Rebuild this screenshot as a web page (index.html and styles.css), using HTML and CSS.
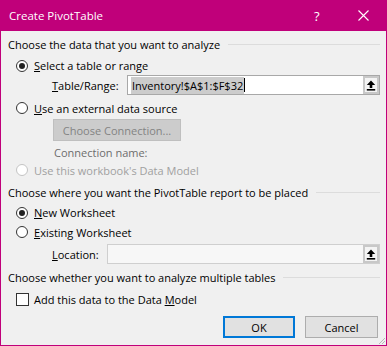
FILE: index.html
```html
<!DOCTYPE html>
<html lang="en">
<head>
    <meta charset="UTF-8">
    <title>Create PivotTable</title>
    <link rel="stylesheet" href="styles.css">
</head>
<body>
    <div class="dialog">
        <div class="titlebar">
            <span class="title">Create PivotTable</span>
            <span class="help">?</span>
            <span class="close">
                <svg width="11" height="11" viewBox="0 0 11 11"><path d="M0.5 0.5 L10.5 10.5 M10.5 0.5 L0.5 10.5" stroke="#fff" stroke-width="1.1"/></svg>
            </span>
        </div>
        <div class="content">
            <div class="group-head g-data"><span>Choose the data that you want to analyze</span><span class="rule"></span></div>
            <div class="option r-select"><span class="radio checked"></span><span><u>S</u>elect a table or range</span></div>
            <div class="field f-range">
                <span class="field-label range-label"><u>T</u>able/Range:</span>
                <div class="ref-box">
                    <span class="ref-text"><span class="sel">Inventory!$A$1:$F$32</span><span class="caret"></span></span>
                    <span class="collapse">
                        <svg width="10" height="11" viewBox="0 0 10 11"><path d="M5 0.5 L0.8 5 H3.7 V8 H6.3 V5 H9.2 Z" fill="#000"/><rect x="0.8" y="9" width="8.4" height="1.6" fill="#000"/></svg>
                    </span>
                </div>
            </div>
            <div class="option r-external"><span class="radio"></span><span><u>U</u>se an external data source</span></div>
            <div class="conn-button">Choose Connection...</div>
            <div class="conn-name">Connection name:</div>
            <div class="option disabled r-model"><span class="radio"></span><span>Use this workbook's Data Model</span></div>

            <div class="group-head g-place"><span>Choose where you want the PivotTable report to be placed</span><span class="rule"></span></div>
            <div class="option r-new"><span class="radio checked"></span><span><u>N</u>ew Worksheet</span></div>
            <div class="option r-existing"><span class="radio"></span><span><u>E</u>xisting Worksheet</span></div>
            <div class="field f-location">
                <span class="field-label loc-label"><u>L</u>ocation:</span>
                <div class="ref-box off">
                    <span class="ref-text"></span>
                    <span class="collapse">
                        <svg width="10" height="11" viewBox="0 0 10 11"><path d="M5 0.5 L0.8 5 H3.7 V8 H6.3 V5 H9.2 Z" fill="#000"/><rect x="0.8" y="9" width="8.4" height="1.6" fill="#000"/></svg>
                    </span>
                </div>
            </div>

            <div class="group-head g-multi"><span>Choose whether you want to analyze multiple tables</span><span class="rule"></span></div>
            <div class="option c-model"><span class="checkbox"></span><span>Add this data to the Data <u>M</u>odel</span></div>

            <div class="buttons">
                <div class="btn default">OK</div>
                <div class="btn">Cancel</div>
            </div>
        </div>
        <svg class="grip" width="9" height="9" viewBox="0 0 9 9"><path d="M8 2 L2 8 M8 5 L5 8" stroke="#b8b8b8" stroke-width="1"/></svg>
    </div>
</body>
</html>
```

FILE: styles.css
```css
body {
    margin: 0;
    padding: 0;
    font-family: "Open Sans", "Noto Sans", sans-serif;
    font-size: 11px;
    color: #000;
}
.dialog {
    position: relative;
    width: 387px;
    height: 346px;
    box-sizing: border-box;
    border: 1px solid #c0007a;
    border-top: none;
    background-color: #f0f0f0;
    display: flex;
    flex-direction: column;
}
.titlebar {
    height: 31px;
    margin: 0 -1px;
    background-color: #c0007a;
    color: #fff;
    display: flex;
    align-items: center;
    font-size: 11.5px;
}
.title {
    flex: 1;
    padding-left: 9px;
}
.help {
    width: 44px;
    font-size: 13px;
}
.close {
    width: 29px;
    display: flex;
    align-items: center;
}
.content {
    padding: 3px 6px 0 7px;
    display: flex;
    flex-direction: column;
}
.group-head {
    height: 20px;
    display: flex;
    align-items: center;
}
.group-head .rule {
    flex: 1;
    height: 1px;
    margin-left: 8px;
    background-color: #dcdcdc;
}
.option {
    height: 20px;
    display: flex;
    align-items: center;
    padding-left: 8px;
}
.radio {
    position: relative;
    width: 10px;
    height: 10px;
    border: 1px solid #333;
    border-radius: 50%;
    background-color: #fff;
    margin-right: 6px;
}
.radio.checked::after {
    content: "";
    position: absolute;
    left: 2px;
    top: 2px;
    width: 6px;
    height: 6px;
    border-radius: 50%;
    background-color: #222;
}
.option.disabled {
    color: #a0a0a0;
}
.option.disabled .radio {
    border-color: #c4c4c4;
}
.checkbox {
    width: 11px;
    height: 11px;
    border: 1px solid #333;
    background-color: #fff;
    margin-right: 5px;
}
.r-select { margin-top: 2px; height: 19px; }
.r-external { margin-top: 3px; }
.r-model { margin-top: 0; }
.g-place { margin-top: 2px; }
.r-new { margin-top: 1px; height: 19px; }
.g-multi { margin-top: 3px; }
.c-model { margin-top: 2px; }

.field {
    height: 20px;
    display: flex;
    align-items: center;
    padding-left: 44px;
}
.f-location { margin-top: 2px; }
.field-label { flex-shrink: 0; }
.range-label { width: 75px; }
.loc-label { width: 55px; }
.ref-box {
    flex: 1;
    height: 20px;
    box-sizing: border-box;
    border: 1px solid #a8a8a8;
    background-color: #fff;
    display: flex;
    align-items: stretch;
}
.ref-box.off {
    background-color: #f7f7f7;
    border-color: #cfcfcf;
}
.ref-text {
    flex: 1;
    display: flex;
    align-items: center;
    padding-left: 3px;
}
.sel {
    background-color: #cccccc;
    padding: 1px 1px;
    line-height: 15px;
}
.caret {
    width: 1px;
    height: 14px;
    background-color: #000;
}
.collapse {
    width: 16px;
    box-sizing: border-box;
    border: 2px solid #c8c8c8;
    background-color: #f4f4f4;
    display: flex;
    align-items: center;
    justify-content: center;
}
.conn-button {
    width: 128px;
    height: 22px;
    box-sizing: border-box;
    margin: 1px 0 0 45px;
    border: 1px solid #bfbfbf;
    background-color: #cccccc;
    color: #838383;
    display: flex;
    align-items: center;
    justify-content: center;
}
.conn-name {
    height: 16px;
    margin: 3px 0 0 46px;
    color: #6d6d6d;
    display: flex;
    align-items: center;
}
.buttons {
    display: flex;
    justify-content: flex-end;
    gap: 10px;
    margin-top: 7px;
    padding-right: 2px;
}
.btn {
    width: 73px;
    height: 22px;
    box-sizing: border-box;
    border: 1px solid #adadad;
    background-color: #e1e1e1;
    display: flex;
    align-items: center;
    justify-content: center;
}
.btn.default {
    width: 72px;
    border: 2px solid #0078d7;
}
.grip {
    position: absolute;
    right: 0;
    bottom: 0;
}
```
